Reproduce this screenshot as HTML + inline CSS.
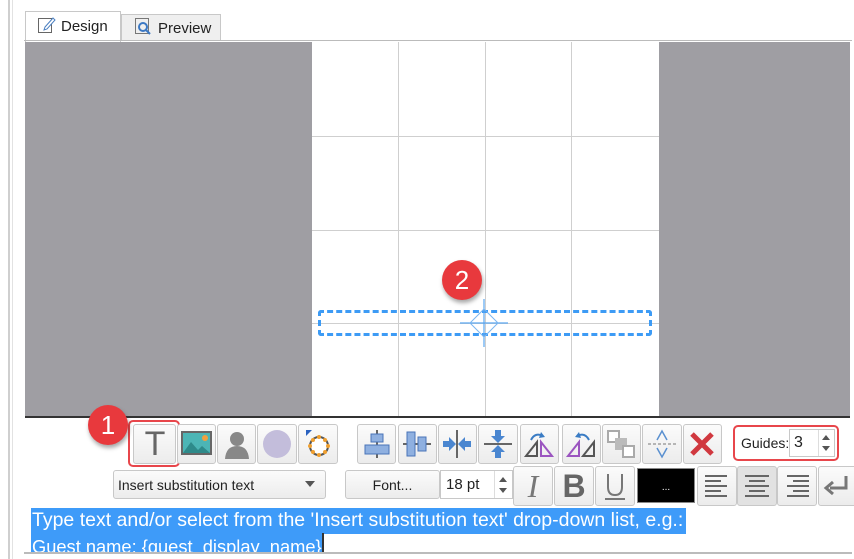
<!DOCTYPE html>
<html><head><meta charset="utf-8"><style>
*{box-sizing:border-box}
body{margin:0;width:854px;height:559px;background:#fff;position:relative;overflow:hidden;font-family:"Liberation Sans",sans-serif}
.a{position:absolute}
.btn{position:absolute;border:1px solid #c8c8c8;border-radius:3px;background:linear-gradient(#fbfbfb,#ececec);}
.gl{position:absolute;background:#cfcfcf}
.badge{position:absolute;width:40px;height:40px;border-radius:50%;background:#e8393d;color:#fff;font-size:26px;text-align:center;line-height:40px;box-shadow:1px 3px 4px rgba(0,0,0,.35)}
</style></head><body>
<div class="a" style="left:8px;top:0;width:2px;height:559px;background:#cfcfcf"></div>
<div class="a" style="left:12px;top:0;width:1px;height:559px;background:#e2e2e2"></div>
<div class="a" style="left:25px;top:11px;width:96px;height:31px;border:1px solid #c8c8c8;border-bottom:none;background:#fff"></div>
<div class="a" style="left:121px;top:14px;width:100px;height:27px;border:1px solid #c8c8c8;border-bottom:none;background:#efefef"></div>
<svg class="a" style="left:37px;top:15px" width="20" height="20"><rect x="1.5" y="3.5" width="13" height="14" fill="none" stroke="#666"/><path d="M8 12 L16 3 L18 5 L10 14 L7 15Z" fill="#fff" stroke="#4a7fc1"/></svg>
<div class="a" style="left:61px;top:18px;font-size:15px;color:#222">Design</div>
<svg class="a" style="left:134px;top:17px" width="20" height="20"><rect x="1.5" y="1.5" width="13" height="15" fill="none" stroke="#777"/><circle cx="9" cy="10" r="4" fill="none" stroke="#3b78c4" stroke-width="2"/><path d="M12 13 L16 17" stroke="#3b78c4" stroke-width="2"/></svg>
<div class="a" style="left:158px;top:20px;font-size:15px;color:#222">Preview</div>
<div class="a" style="left:24px;top:40px;width:828px;height:1px;background:#bbb"></div>
<div class="a" style="left:25px;top:42px;width:825px;height:376px;background:#9f9ea3"></div>
<div class="a" style="left:312px;top:42px;width:347px;height:376px;background:#fff"></div>
<div class="gl" style="left:398px;top:42px;width:1px;height:376px"></div>
<div class="gl" style="left:485px;top:42px;width:1px;height:376px"></div>
<div class="gl" style="left:571px;top:42px;width:1px;height:376px"></div>
<div class="gl" style="left:312px;top:136px;width:347px;height:1px"></div>
<div class="gl" style="left:312px;top:230px;width:347px;height:1px"></div>
<div class="gl" style="left:312px;top:323px;width:347px;height:1px"></div>
<div class="a" style="left:25px;top:416px;width:825px;height:2px;background:#333"></div>
<div class="a" style="left:318px;top:310px;width:334px;height:26px;border:3px dashed #3d9bf5;border-radius:3px"></div>
<svg class="a" style="left:458px;top:297px" width="52" height="52"><path d="M26 2V50M2 26H50" stroke="#5aa6f0" stroke-width="1.2"/><path d="M26 12L40 26L26 40L12 26Z" fill="none" stroke="#7ab6f2"/></svg>
<div class="badge" style="left:442px;top:260px">2</div>
<div class="btn" style="left:133px;top:424px;width:43px;height:40px"></div>
<div class="a" style="left:128px;top:420px;width:52px;height:47px;border:2px solid #e8464b;border-radius:5px"></div>
<div class="a" style="left:136px;top:424px;width:38px;font-size:34px;color:#666;text-align:center;line-height:40px">T</div>
<div class="btn" style="left:177px;top:424px;width:39px;height:40px"></div>
<svg class="a" style="left:181px;top:430px" width="32" height="28"><rect x="1" y="2" width="29" height="22" fill="#4cb5b5" stroke="#666" stroke-width="2"/><path d="M2 23 L10 12 L17 20 L21 16 L29 23Z" fill="#2e8a8a"/><circle cx="24" cy="8" r="3" fill="#f0a040"/></svg>
<div class="btn" style="left:217px;top:424px;width:39px;height:40px"></div>
<svg class="a" style="left:221px;top:428px" width="32" height="32"><circle cx="16" cy="11" r="7" fill="#888"/><path d="M4 31 Q5 18 16 18 Q27 18 28 31Z" fill="#888"/></svg>
<div class="btn" style="left:257px;top:424px;width:40px;height:40px"></div>
<div class="a" style="left:263px;top:430px;width:28px;height:28px;border-radius:50%;background:#c3bddb"></div>
<div class="btn" style="left:298px;top:424px;width:40px;height:40px"></div>
<svg class="a" style="left:302px;top:428px" width="32" height="32"><circle cx="17" cy="18" r="9" fill="#fff" stroke="#555" stroke-width="2"/><g fill="#f0a030"><circle cx="17" cy="9" r="2"/><circle cx="17" cy="27" r="2"/><circle cx="8" cy="18" r="2"/><circle cx="26" cy="18" r="2"/><circle cx="11" cy="12" r="2"/><circle cx="23" cy="24" r="2"/><circle cx="23" cy="12" r="2"/><circle cx="11" cy="24" r="2"/></g><path d="M4 2 L10 2 L4 8Z" fill="#2a62c0"/></svg>
<div class="btn" style="left:357px;top:424px;width:39px;height:40px"></div>
<svg class="a" style="left:361px;top:428px" width="32" height="32"><path d="M16 2V30" stroke="#666" stroke-width="2"/><rect x="10" y="6" width="12" height="8" fill="#8fb0e0" stroke="#4a74b8"/><rect x="4" y="17" width="24" height="9" fill="#8fb0e0" stroke="#4a74b8"/></svg>
<div class="btn" style="left:398px;top:424px;width:39px;height:40px"></div>
<svg class="a" style="left:401px;top:428px" width="32" height="32"><path d="M2 16H30" stroke="#666" stroke-width="2"/><rect x="6" y="4" width="8" height="24" fill="#8fb0e0" stroke="#4a74b8"/><rect x="17" y="9" width="8" height="14" fill="#8fb0e0" stroke="#4a74b8"/></svg>
<div class="btn" style="left:438px;top:424px;width:39px;height:40px"></div>
<svg class="a" style="left:441px;top:428px" width="32" height="32"><path d="M16 2V30" stroke="#666" stroke-width="2"/><path d="M2 13H8V9L15 16L8 23V19H2Z M30 13H24V9L17 16L24 23V19H30Z" fill="#4a86d0"/></svg>
<div class="btn" style="left:478px;top:424px;width:40px;height:40px"></div>
<svg class="a" style="left:482px;top:428px" width="32" height="32"><path d="M2 16H30" stroke="#666" stroke-width="2"/><path d="M13 2V8H9L16 15L23 8H19V2Z M13 30V24H9L16 17L23 24H19V30Z" fill="#4a86d0"/></svg>
<div class="btn" style="left:520px;top:424px;width:39px;height:40px"></div>
<svg class="a" style="left:523px;top:428px" width="32" height="32"><path d="M3 28L14 14V28Z" fill="none" stroke="#555" stroke-width="2"/><path d="M18 28L29 14V28Z" transform="matrix(-1 0 0 1 47 0)" fill="none" stroke="#9b55c0" stroke-width="2"/><path d="M8 12 Q12 4 20 8" fill="none" stroke="#3a7cc4" stroke-width="2"/><path d="M18 4 L22 9 L16 10Z" fill="#3a7cc4"/></svg>
<div class="btn" style="left:562px;top:424px;width:39px;height:40px"></div>
<svg class="a" style="left:565px;top:428px" width="32" height="32"><path d="M14 28L3 14V28Z" transform="matrix(-1 0 0 1 17 0)" fill="none" stroke="#9b55c0" stroke-width="2"/><path d="M18 28L29 14V28Z" fill="none" stroke="#555" stroke-width="2"/><path d="M24 12 Q20 4 12 8" fill="none" stroke="#3a7cc4" stroke-width="2"/><path d="M14 4 L10 9 L16 10Z" fill="#3a7cc4"/></svg>
<div class="btn" style="left:602px;top:424px;width:39px;height:40px"></div>
<svg class="a" style="left:605px;top:428px" width="32" height="32"><rect x="3" y="3" width="11" height="11" fill="#fff" stroke="#aaa" stroke-width="2"/><rect x="10" y="10" width="12" height="12" fill="#bbb"/><rect x="18" y="18" width="11" height="11" fill="#fff" stroke="#aaa" stroke-width="2"/></svg>
<div class="btn" style="left:642px;top:424px;width:40px;height:40px"></div>
<svg class="a" style="left:646px;top:428px" width="32" height="32"><path d="M2 16H30" stroke="#777" stroke-dasharray="3 2"/><path d="M11 12L16 3L21 12 M11 20L16 29L21 20" fill="none" stroke="#5a90d0" stroke-width="1.5"/></svg>
<div class="btn" style="left:683px;top:424px;width:39px;height:40px"></div>
<svg class="a" style="left:688px;top:430px" width="28" height="28"><path d="M4 4L24 24M24 4L4 24" stroke="#d0383f" stroke-width="5"/></svg>
<div class="a" style="left:733px;top:425px;width:106px;height:36px;border:2px solid #e8464b;border-radius:5px"></div>
<div class="a" style="left:741px;top:435px;font-size:14px;color:#222">Guides:</div>
<div class="a" style="left:789px;top:429px;width:46px;height:28px;border:1px solid #c8c8c8;background:#fff"></div>
<div class="a" style="left:794px;top:434px;font-size:16px;color:#222">3</div>
<div class="a" style="left:818px;top:430px;width:1px;height:26px;background:#ddd"></div>
<svg class="a" style="left:820px;top:432px" width="12" height="22"><path d="M2 8L6 3L10 8Z M2 14L6 19L10 14Z" fill="#555"/></svg>
<div class="btn" style="left:113px;top:470px;width:213px;height:29px"></div>
<div class="a" style="left:118px;top:477px;font-size:14px;color:#222">Insert substitution text</div>
<svg class="a" style="left:304px;top:480px" width="12" height="8"><path d="M1 1H11L6 7Z" fill="#555"/></svg>
<div class="btn" style="left:345px;top:470px;width:95px;height:29px"></div>
<div class="a" style="left:345px;top:477px;width:95px;text-align:center;font-size:14px;color:#222">Font...</div>
<div class="a" style="left:440px;top:470px;width:73px;height:29px;border:1px solid #c8c8c8;background:#fff"></div>
<div class="a" style="left:446px;top:476px;font-size:15px;color:#222">18 pt</div>
<div class="a" style="left:494px;top:471px;width:1px;height:27px;background:#ddd"></div>
<svg class="a" style="left:497px;top:474px" width="12" height="22"><path d="M2 8L6 3L10 8Z M2 14L6 19L10 14Z" fill="#555"/></svg>
<div class="btn" style="left:513px;top:466px;width:40px;height:40px"></div>
<div class="a" style="left:513px;top:466px;width:40px;text-align:center;font-size:32px;color:#777;font-style:italic;line-height:40px;font-family:'Liberation Serif',serif">I</div>
<div class="btn" style="left:554px;top:466px;width:40px;height:40px"></div>
<div class="a" style="left:554px;top:466px;width:40px;text-align:center;font-size:32px;color:#666;font-weight:bold;line-height:40px">B</div>
<div class="btn" style="left:595px;top:466px;width:40px;height:40px"></div>
<svg class="a" style="left:600px;top:470px" width="30" height="32"><path d="M8 4V17Q8 25 15 25Q22 25 22 17V4" fill="none" stroke="#777" stroke-width="2"/><path d="M5 29H25" stroke="#777" stroke-width="2"/></svg>
<div class="a" style="left:637px;top:468px;width:58px;height:35px;background:#000;border:1px solid #888;color:#fff;font-size:10px;text-align:center;line-height:38px">...</div>
<div class="btn" style="left:697px;top:466px;width:40px;height:40px"></div>
<svg class="a" style="left:701px;top:470px" width="32" height="32"><path d="M4 6H26M4 11H20M4 16H26M4 21H20M4 26H26" stroke="#666" stroke-width="2"/></svg>
<div class="btn" style="left:737px;top:466px;width:40px;height:40px;background:#e2e2e2"></div>
<svg class="a" style="left:741px;top:470px" width="32" height="32"><path d="M4 6H28M8 11H24M4 16H28M8 21H24M4 26H28" stroke="#666" stroke-width="2"/></svg>
<div class="btn" style="left:777px;top:466px;width:40px;height:40px"></div>
<svg class="a" style="left:781px;top:470px" width="32" height="32"><path d="M6 6H28M12 11H28M6 16H28M12 21H28M6 26H28" stroke="#666" stroke-width="2"/></svg>
<div class="btn" style="left:818px;top:466px;width:40px;height:40px"></div>
<svg class="a" style="left:822px;top:472px" width="32" height="30"><path d="M24 4V16H8" fill="none" stroke="#777" stroke-width="3"/><path d="M11 10L4 16L11 22" fill="none" stroke="#777" stroke-width="3"/></svg>
<div class="a" style="left:31px;top:508px;width:655px;height:26px;background:#3e9bf9"></div>
<div class="a" style="left:31px;top:534px;width:292px;height:19px;background:#3e9bf9"></div>
<div class="a" style="left:322px;top:533px;width:2px;height:20px;background:#333"></div>
<div class="a" style="left:32px;top:509px;font-size:19.5px;color:#fff;white-space:nowrap">Type text and/or select from the 'Insert substitution text' drop-down list, e.g.:</div>
<div class="a" style="left:32px;top:536px;width:292px;height:17px;overflow:hidden;font-size:18.3px;color:#fff;white-space:nowrap;line-height:22px">Guest name: {guest_display_name}</div>
<div class="a" style="left:24px;top:552px;width:828px;height:2px;background:#bbb"></div>
<div class="badge" style="left:88px;top:405px">1</div>
</body></html>
